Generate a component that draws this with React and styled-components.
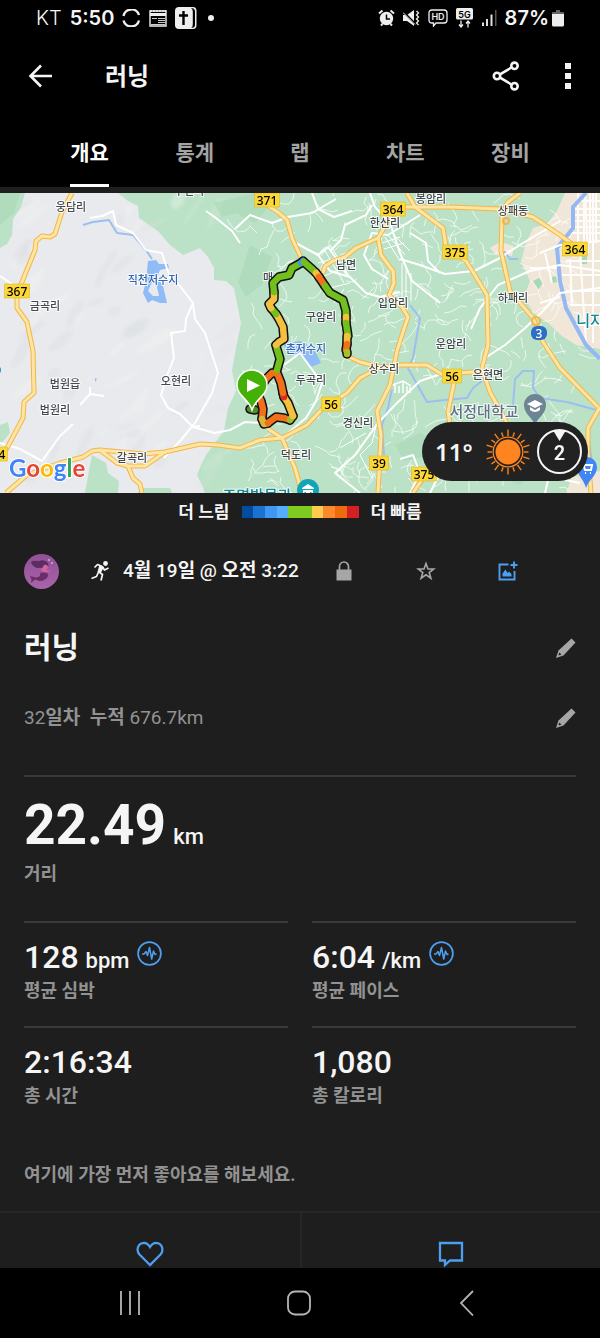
import React from 'react'
import styled, { createGlobalStyle } from 'styled-components'

const GlobalStyle = createGlobalStyle`
  * {
    box-sizing: border-box;
  }
  body {
    margin: 0;
    background: #1e1e1e;
    color: #f5f5f5;
    font-family: Roboto, "Noto Sans CJK KR", sans-serif;
  }
  button, a {
    font: inherit;
    color: inherit;
    background: none;
    border: none;
    padding: 0;
    cursor: pointer;
    text-decoration: none;
  }
  h1, h2, p, dl, dd {
    margin: 0;
  }
  svg {
    display: block;
  }
`

/* ---------- map data ---------- */

const highways = [
  '72,0 62,19 55,41 50,44 42,43 36,48 35,57 22,89 17,102 17,115 27,129 33,158 34,200 24,209 23,225 7,255 0,266',
  '6,300 27,282 60,270 83,264 92,258 100,257 143,261 165,259 200,251 218,252 240,255 260,247 282,245 307,232 323,215 347,200 360,185 380,174 402,172 427,172 443,182 458,180 473,179 483,180',
  '100,257 117,270 128,273 145,273 165,259',
  '128,273 133,285 140,291 142,300',
  '267,12 279,20 287,27 292,45 303,69',
  '323,80 325,73 333,68 345,64 356,55 378,45 387,30 393,18',
  '378,45 381,62 393,78 394,90 389,102 402,114 408,124 402,142 397,158 390,192 377,218 381,242 378,300',
  '347,163 360,169 380,174',
  '268,236 282,245 295,275 302,300',
  '407,0 415,14 443,35 446,54 466,68 473,79 487,102 488,152 482,175 490,199 507,230',
  '455,185 448,219 451,238 430,275 413,300',
  '400,14 450,14 500,16 533,24 560,42 580,57',
  '520,0 507,10 502,24 501,58 510,98 533,125 543,149 560,175 598,214',
  '600,214 588,235 588,260 591,300',
]

const minorRoads = [
  '90,25 102,23 113,18 116,32 133,40 146,57 162,60 170,85 180,93 193,110 186,126 185,138 171,140 174,165 168,180 161,202 168,215 180,221 193,234 200,233 ',
  '193,110 195,126 205,140 218,180 212,200 195,230 180,248 164,265',
  '193,234 215,240 230,237 245,229 262,230',
  '80,212 90,201 104,203',
  '90,201 90,194',
  '73,231 60,243 42,268 20,256 0,250',
  '0,83 12,91 17,104',
  '292,48 318,62 330,78 350,84 366,100 380,104 400,99',
  '318,62 328,54 336,65 347,82',
  '282,245 306,225 316,208 322,190 300,160 284,172',
  '372,12 366,22 345,32 341,47 330,58',
  '400,66 420,72 445,81 474,78 498,66 523,50 560,28',
  '360,300 335,280 355,262 378,230 395,212 420,188 450,178',
  '471,136 480,115 498,92 530,78 560,72 600,78',
  '485,165 505,152 524,136 541,120 560,100 600,95',
  '370,0 375,14 390,30 400,60 412,88 440,110',
  '410,40 426,50 428,68 440,80',
  '540,60 560,52 600,48',
  '430,300 445,270 470,262 500,280 540,282 580,290',
  '400,266 413,262 420,280 410,300',
  '545,300 552,270 570,240',
  '388,86 372,76 364,62 372,40 388,42 420,22',
  '235,36 250,22 272,30 288,24 312,20 336,6',
  '240,50 232,38 216,25 206,18',
  '312,0 318,16 334,24 352,18',
]

const rivers = [
  '586,0 573,14 573,35 557,55 560,88 566,115 586,152 600,166',
]

const streams = [
  '83,32 93,29 109,27 117,40 133,42 146,57 152,66',
  '410,112 420,125 413,165 408,175 427,209 445,207 467,205 473,195 482,188',
  '513,212 515,186 523,178 534,178 533,195 540,205 567,209 600,218',
  '392,196 388,215 382,232 384,262',
  '504,58 510,66 518,66',
  '588,240 592,270 590,300',
]

const routeSigns = [
  { x: 17, y: 98, text: '367' },
  { x: -5, y: 261, text: '364' },
  { x: 267, y: 7, text: '371' },
  { x: 393, y: 16, text: '364' },
  { x: 455, y: 59, text: '375' },
  { x: 575, y: 56, text: '364' },
  { x: 452, y: 183, text: '56', w: 19 },
  { x: 331, y: 211, text: '56', w: 19 },
  { x: 379, y: 270, text: '39', w: 19 },
  { x: 424, y: 281, text: '375' },
]

const places = [
  { x: 71, y: 13, text: '웅담리' },
  { x: 45, y: 112, text: '금곡리' },
  { x: 65, y: 190, text: '법원읍' },
  { x: 55, y: 216, text: '법원리' },
  { x: 176, y: 187, text: '오현리' },
  { x: 132, y: 264, text: '갈곡리' },
  { x: 189, y: -3, text: '무건리' },
  { x: 153, y: 86, text: '직천저수지', color: '#3367b5' },
  { x: 385, y: 29, text: '한산리' },
  { x: 346, y: 71, text: '남면' },
  { x: 268, y: 84, text: '매' },
  { x: 321, y: 123, text: '구암리' },
  { x: 393, y: 109, text: '입암리' },
  { x: 306, y: 155, text: '촌저수지', color: '#3367b5' },
  { x: 311, y: 186, text: '두곡리' },
  { x: 384, y: 175, text: '상수리' },
  { x: 358, y: 229, text: '경신리' },
  { x: 296, y: 261, text: '덕도리' },
  { x: 257, y: 301, text: '조명박물관', color: '#12869a', size: 15 },
  { x: 431, y: 5, text: '봉암리' },
  { x: 513, y: 17, text: '상패동' },
  { x: 513, y: 104, text: '하패리' },
  { x: 451, y: 150, text: '운암리' },
  { x: 488, y: 181, text: '은현면' },
  { x: 484, y: 217, text: '서정대학교', color: '#5f7385', size: 15 },
  { x: 590, y: 126, text: '니지', color: '#12869a', size: 15 },
]

const GREEN = '#73bf1d'
const YELLOW = '#f5bf3f'
const ORANGE = '#f2701a'

const track = [
  { color: '#4f8f2a', points: '250,216 255,217' },
  { color: ORANGE, points: '257,200 261,208 263,216 262,226' },
  { color: '#d9b53a', points: '262,226 264,231 268,230' },
  { color: ORANGE, points: '268,230 276,224 284,225 290,227' },
  { color: '#9dbb33', points: '290,227 293,223' },
  { color: YELLOW, points: '293,223 288,210 284,204' },
  { color: '#dd2a1c', points: '284,204 283,200' },
  { color: ORANGE, points: '283,200 281,190 277,180 272,180 266,186 262,192' },
  { color: GREEN, points: '277,177 280,166 277,156 276,152' },
  { color: YELLOW, points: '276,152 279,149 284,146 283,134 279,126 276,121' },
  { color: GREEN, points: '276,121 271,115' },
  { color: YELLOW, points: '271,115 269,111 274,106 274,99' },
  { color: GREEN, points: '274,99 273,90 279,84 289,82 292,75 301,70' },
  { color: '#4294f0', points: '301,70 303,68' },
  { color: GREEN, points: '304,69 313,77 316,80' },
  { color: YELLOW, points: '316,80 319,84' },
  { color: ORANGE, points: '319,84 325,93' },
  { color: GREEN, points: '325,93 330,100 343,107 346,118 346,124' },
  { color: YELLOW, points: '346,124 346,130' },
  { color: GREEN, points: '346,130 348,143' },
  { color: YELLOW, points: '347,143 347,151' },
  { color: ORANGE, points: '347,151 346,157' },
  { color: '#a6c02c', points: '347,159 347,161' },
]

// small seeded generator, keeps the back roads and the hill shading stable between renders
function createRandom(seed) {
  let value = seed
  return () => {
    value = (value * 16807) % 2147483647
    return value / 2147483647
  }
}

function buildLanes() {
  const random = createRandom(417)
  const lanes = []
  for (let i = 0; i < 330; i++) {
    let x = 245 + random() * 335
    let y = random() * 300
    if (x < 330 && y < 150 && random() < 0.5) continue
    let angle = random() * Math.PI * 2
    let d = `M${x.toFixed(0)} ${y.toFixed(0)}`
    const steps = 2 + Math.floor(random() * 4)
    for (let s = 0; s < steps; s++) {
      angle += (random() - 0.5) * 1.7
      x += Math.cos(angle) * 6
      y += Math.sin(angle) * 6
      d += `L${x.toFixed(0)} ${y.toFixed(0)}`
    }
    lanes.push(d)
  }
  return lanes.join('')
}

function buildHills() {
  const random = createRandom(93)
  return Array.from({ length: 70 }, (_, i) => ({
    x: Math.round(20 + random() * 210),
    y: Math.round(random() * 290),
    rx: Math.round(6 + random() * 14),
    ry: Math.round(2 + random() * 4),
    angle: Math.round(-70 + random() * 50),
    light: i % 2 === 0,
  }))
}

const lanes = buildLanes()
const hills = buildHills()

function MapDrawing() {
  return (
    <MapSvg viewBox="0 0 600 300" preserveAspectRatio="xMidYMid slice" role="img" aria-label="러닝 경로 지도">
      <defs>
        <filter id="soft"><feGaussianBlur stdDeviation="1.5" /></filter>
      </defs>
      <rect width="600" height="300" fill="#bbe2c6" />
      <path fill="#e8eaed" d="M0 0H118L128 8 138 13 139 25 158 38 170 52 183 62 200 55 208 64 214 75 214 87 226 88 234 95 237 110 241 130 236 155 232 178 236 198 228 215 224 238 206 262 201 272 197 282 202 292 205 300H0Z" />
      <g filter="url(#soft)">
        {hills.map((hill, i) => (
          <ellipse
            key={i}
            cx={hill.x}
            cy={hill.y}
            rx={hill.rx}
            ry={hill.ry}
            fill={hill.light ? '#f1f3f0' : '#dcdee1'}
            opacity={hill.x > 180 ? 0.15 : 0.4}
            transform={`rotate(${hill.angle} ${hill.x} ${hill.y})`}
          />
        ))}
      </g>
      <path fill="#bbe2c6" d="M0 0H25L21 14 13 26 12 42 7 51 0 55ZM0 232 8 229 10 240 0 252ZM92 262 106 270 108 280 119 288 118 300H85L89 278ZM140 295H170L172 300H138Z" />
      <path fill="#a9d8b7" opacity=".6" d="M0 0H20L14 20 0 32ZM255 0 270 12 255 30 236 20 222 24 214 10ZM250 52 272 64 262 92 246 104 238 90ZM395 252 420 240 440 250 424 264 404 268ZM490 240 520 236 548 262 520 292 500 284Z" />
      <path fill="#f1e7d8" d="M565 0 557 18 548 30 533 35 526 50 521 68 530 88 524 104 533 119 548 130 562 143 576 152 600 156V0ZM490 55 500 49 514 53 512 63 496 62ZM566 300 572 284 600 278V300Z" />
      <path fill="#a9d8b7" d="M533 88 539 85 543 90 538 97ZM552 84 556 83 557 89 552 90ZM582 63H587V71H582Z" />
      <path fill="none" stroke="#fff" strokeWidth="1" opacity=".7" d={lanes} />
      <path
        fill="none"
        stroke="#fff"
        strokeWidth="2"
        opacity=".9"
        d="M577 8H600M575 16H600M575 22H600M571 28H600M570 34H600M567 40H600M566 68H600M562 82H600M566 98H600M570 112H600M575 132H600M578 0V50M584 10V50M590 0V50M596 0V50M585 0 588 60M593 0V150M580 60 586 150M570 66 572 112M545 60 552 90M530 75H560M540 110 560 104"
      />
      <path fill="none" stroke="#fff" strokeWidth="1" d="M324 56 344 90M330 52 350 84M318 70 340 64M322 84 345 74M326 96 350 90M334 110 344 96M385 44 400 68M388 42 405 62M392 40 410 58M382 50 400 44M384 56 404 50M402 70V118M406 72V112M411 80V108M380 215 372 250 360 262M366 240 340 255M360 262 372 285" />
      <path fill="#8fbcf7" d="M148 68 156 67 159 71 168 71 169 75 160 77 157 84 163 93 167 110 160 110 152 107 148 110 143 100 146 88ZM95 185 97 186 95 189ZM283 151 300 148 314 156 321 170 311 174 302 163 288 160Z" />
      <path fill="#e8eaed" d="M153 87 157 94 159 103 153 103 148 98Z" />
      {rivers.map((points) => <polyline key={points} points={points} fill="none" stroke="#94b8f4" strokeWidth="4" />)}
      {streams.map((points) => <polyline key={points} points={points} fill="none" stroke="#9dbff0" strokeWidth="2" strokeLinejoin="round" />)}
      {minorRoads.map((points) => <polyline key={points} points={points} fill="none" stroke="#fff" strokeWidth="2" strokeLinejoin="round" />)}
      {highways.map((points) => <polyline key={points} points={points} fill="none" stroke="#f4b545" strokeWidth="5" strokeLinejoin="round" />)}
      {highways.map((points) => <polyline key={points} points={points} fill="none" stroke="#fde6a4" strokeWidth="3" strokeLinejoin="round" />)}
      <circle cx="536" cy="128" r="4" fill="none" stroke="#f4b545" strokeWidth="2" />
      <circle cx="506" cy="28" r="3" fill="none" stroke="#f4b545" strokeWidth="2" />

      {places.map((place) => (
        <PlaceName key={place.text} x={place.x} y={place.y} fill={place.color || '#454a50'} $size={place.size}>
          {place.text}
        </PlaceName>
      ))}
      {routeSigns.map((sign) => {
        const width = sign.w || 25
        return (
          <g key={`${sign.x}-${sign.y}`}>
            <rect x={sign.x - width / 2} y={sign.y - 7} width={width} height="14" fill="#fbd737" stroke="#e0b928" strokeWidth=".6" />
            <SignText x={sign.x} y={sign.y}>{sign.text}</SignText>
          </g>
        )
      })}
      <rect x="531" y="133" width="16" height="14" rx="6" fill="#2e6fc4" />
      <SignText x="539" y="140" fill="#fff">3</SignText>

      <path d="M395 200V190M399 200V193M403 200V189M407 200V193M410 200V194M393 192 403 188 411 193" stroke="#fff" strokeWidth="1.5" fill="none" />
      <circle cx="308" cy="297" r="11" fill="#12a5b8" />
      <path d="M302 295 308 291 314 295V296H302ZM303 297H313V304H303Z" fill="#fff" />
      <path d="M305 303V299L308 302 311 299V303" stroke="#12a5b8" fill="none" />
      <path d="M535 232C532 224 524 221 524 212A11 11 0 0 1 546 212C546 221 538 224 535 232Z" fill="#6d8494" />
      <path d="M527 211 535 207 543 211 535 215ZM530 214V217Q535 221 540 217V214L535 217Z" fill="#fff" />
      <path d="M586 295C584 286 577 283 577 274A10 10 0 0 1 597 274C597 283 589 286 586 295Z" fill="#4285f4" />
      <path d="M580 270H583L585 277H591L592 272H584M585 280H586M590 280H591" stroke="#fff" strokeWidth="2" fill="none" />
      <circle cx="-3" cy="177" r="4" fill="#12a5b8" />

      {track.map((part, i) => <polyline key={i} points={part.points} fill="none" stroke="#111" strokeWidth="9.5" strokeLinecap="round" strokeLinejoin="round" />)}
      {track.map((part, i) => <polyline key={i} points={part.points} fill="none" stroke={part.color} strokeWidth="6.5" strokeLinecap="round" strokeLinejoin="round" />)}
      <path d="M252 217C249 206 237 203 237 192A15 15 0 0 1 267 192C267 203 255 206 252 217Z" fill="#43b105" stroke="#fff" strokeWidth="1.5" />
      <path d="M247 186 260 192.500 247 199Z" fill="#fff" />

      <GoogleMark x="9" y="284">
        <tspan fill="#4285f4">G</tspan>
        <tspan fill="#ea4335">o</tspan>
        <tspan fill="#fbbc05">o</tspan>
        <tspan fill="#4285f4">g</tspan>
        <tspan fill="#34a853">l</tspan>
        <tspan fill="#ea4335">e</tspan>
      </GoogleMark>
    </MapSvg>
  )
}

/* ---------- icons ---------- */

const SyncIcon = () => (
  <svg width="19" height="18" viewBox="0 0 19 18" fill="none" stroke="#eee" strokeWidth="2.400">
    <path d="M1.500 7A8 8 0 0 1 17 6M1.500 11.500A8 8 0 0 0 17 11.500" />
  </svg>
)

const CalendarIcon = () => (
  <svg width="18" height="18" viewBox="0 0 18 18">
    <path d="M1 2H17V17H1Z" fill="none" stroke="#eee" strokeWidth="1.400" />
    <path d="M1 4H17V7H1Z" fill="#eee" />
    <path d="M2 1V3M5 1V3M8 1V3M11 1V3M14 1V3M16.500 1V3" stroke="#eee" strokeWidth="1.500" />
    <path d="M9 9.500H16M9 11.500H16M9 13.500H16M2 15.500H16M3 9.500H8" stroke="#ccc" strokeWidth="1.100" />
  </svg>
)

const BibleIcon = () => (
  <svg width="22" height="22" viewBox="0 0 22 22">
    <path d="M4 0H18Q21.500 0 21.500 4V18Q21.500 22 18 22H4Q0 22 0 18V4Q0 0 4 0Z" fill="#eee" />
    <path d="M16 1Q19.500 1 20 4V18Q20 21 16 21Q18 20 17.800 17V5Q18 2 16 1Z" fill="#000" />
    <path d="M8.500 4V18M4 8.500H13" stroke="#000" strokeWidth="2.400" />
  </svg>
)

const AlarmIcon = () => (
  <svg width="17" height="18" viewBox="0 0 17 18">
    <circle cx="8.500" cy="9.500" r="6.700" fill="#eee" />
    <path d="M1 4.500 4.500 1.500M16 4.500 12.500 1.500M3 16.500 4.500 15M14 16.500 12.500 15" stroke="#eee" strokeWidth="2" />
    <path d="M8.500 5.500V10H12" stroke="#000" strokeWidth="1.500" fill="none" />
  </svg>
)

const MuteIcon = () => (
  <svg width="17" height="18" viewBox="0 0 17 18">
    <path d="M0 6H4L11 1V17L4 12H0Z" fill="#eee" />
    <path d="M0 2.500 13 15.500" stroke="#000" strokeWidth="2" />
    <path d="M0 3.500 12 15.500" stroke="#eee" />
    <path d="M13.500 2 15.500 4 13.500 6 15.500 8 13.500 10 15.500 12 13.500 14 15.500 16" stroke="#eee" strokeWidth="1.300" fill="none" />
  </svg>
)

const HdIcon = () => (
  <svg width="20" height="18" viewBox="0 0 20 18">
    <path d="M4 1H16Q19 1 19 4V11Q19 14 16 14H8L5.500 17V14H4Q1 14 1 11V4Q1 1 4 1Z" fill="none" stroke="#eee" strokeWidth="1.300" />
    <TinyText x="10" y="11" fill="#eee">HD</TinyText>
  </svg>
)

const FiveGIcon = () => (
  <svg width="17" height="20" viewBox="0 0 17 20">
    <rect width="17" height="11.500" rx="1.500" fill="#eee" />
    <TinyText x="8.500" y="9.500" fill="#000">5G</TinyText>
    <path d="M5 12.500V19M3 16.500 5 19 7 16.500M12 19.500V13M10 15.500 12 13 14 15.500" fill="none" stroke="#eee" strokeWidth="1.300" />
  </svg>
)

const SignalIcon = () => (
  <svg width="16" height="18" viewBox="0 0 16 18">
    <path d="M1 13.500H3V17H1ZM5 10H7V17H5ZM9.500 5.500H11.500V17H9.500Z" fill="#ddd" />
    <path d="M14 1H15.500V17H14Z" fill="#555" />
  </svg>
)

const BatteryIcon = () => (
  <svg width="12" height="18" viewBox="0 0 12 18">
    <path d="M4 1H8V3H11Q12 3 12 4V6H0V4Q0 3 1 3H4Z" fill="#666" />
    <path d="M0 5H12V16Q12 17.500 10.500 17.500H1.500Q0 17.500 0 16Z" fill="#eee" />
  </svg>
)

const BackIcon = () => (
  <svg width="24" height="24" viewBox="0 0 24 24" fill="none" stroke="#f5f5f5" strokeWidth="2.600">
    <path d="M24 12H2M13 1.500 2.500 12 13 22.500" />
  </svg>
)

const ShareIcon = () => (
  <svg width="28" height="30" viewBox="0 0 28 30" fill="none" stroke="#f5f5f5" strokeWidth="2.600">
    <circle cx="22.500" cy="4.800" r="3.200" />
    <circle cx="5" cy="15" r="3.200" />
    <circle cx="22.500" cy="25.200" r="3.200" />
    <path d="M8 13.300 19.500 6.500M8 16.700 19.500 23.500" />
  </svg>
)

const MoreIcon = () => (
  <svg width="8" height="28" viewBox="0 0 8 28" fill="#f5f5f5">
    <path d="M1 1H7V7H1ZM1 11H7V17H1ZM1 21H7V27H1Z" />
  </svg>
)

const Avatar = () => (
  <svg width="35" height="35" viewBox="0 0 35 35" role="img" aria-label="프로필">
    <defs>
      <linearGradient id="avatar" x1="0" y1="0" x2="0" y2="1">
        <stop offset="0" stopColor="#915097" />
        <stop offset="1" stopColor="#a964ab" />
      </linearGradient>
    </defs>
    <circle cx="17.500" cy="17.500" r="17.500" fill="url(#avatar)" />
    <path d="M7 8Q9 6 15 7Q21 5 24 9Q26 13 21 15Q17 13 13 14Q8 12 7 8Z" fill="#5d2c63" />
    <path d="M20 11Q24 10 24 14L22 16 28 17 21 18.500 17 16Z" fill="#d3649f" />
    <path d="M16 19Q25 17 24 22Q22 27 15 27L11 25.500 7 29 7.500 25.500 6 22 12 23.500Q17 23 16 19Z" fill="#6b2f68" />
    <circle cx="25" cy="6" r="1" fill="#d7a5d8" />
    <circle cx="28" cy="9" r="1" fill="#d7a5d8" />
  </svg>
)

const RunnerIcon = () => (
  <svg width="19" height="20" viewBox="0 0 19 20">
    <circle cx="14.500" cy="2.500" r="2.400" fill="#f5f5f5" />
    <path d="M3.500 6.500 6.500 3.500 11 5.500 8 11 11.500 13.500 10 19.500M7.500 11 5.500 15.500 0.500 17.500M11.500 6 13.500 9 17.500 7" fill="none" stroke="#f5f5f5" strokeWidth="1.700" strokeLinejoin="round" />
    <path d="M8.500 3.500 13 6 9.500 12.500 6.500 11Z" fill="#f5f5f5" />
  </svg>
)

const LockIcon = () => (
  <svg width="16" height="20" viewBox="0 0 16 20">
    <path d="M3.500 9V5.500A4.500 4.500 0 0 1 12.500 5.500V9" fill="none" stroke="#a6a6a6" strokeWidth="1.700" />
    <path d="M.5 8.500H15.500V19.500H.5Z" fill="#a6a6a6" />
  </svg>
)

const StarIcon = () => (
  <svg width="20" height="20" viewBox="0 0 20 20" fill="none" stroke="#a6a6a6" strokeWidth="1.600">
    <path d="M10 2.500 12 8H17.800L13.200 11.500 14.900 17.200 10 13.800 5.100 17.200 6.800 11.500 2.200 8H8Z" />
  </svg>
)

const AddImageIcon = () => (
  <svg width="20" height="20" viewBox="0 0 20 20">
    <path d="M10.500 3.500H1.500V18.500H16.500V10" fill="none" stroke="#4d9ff0" strokeWidth="1.900" />
    <path d="M12.500 4H19.500M16 .5V7.500" stroke="#4d9ff0" strokeWidth="1.900" />
    <path d="M4.500 15.500V12.500L7.500 8.500 9.500 12 11 10.500 13.500 13V15.500Z" fill="#4d9ff0" />
  </svg>
)

const PencilIcon = () => (
  <svg width="20" height="20" viewBox="0 0 20 20">
    <path d="M15.500 .5 19.500 4.500 7.500 17.500 0 20 2.500 12.500Z" fill="#a6a6a6" />
    <path d="M3.200 14.500 5.500 16.500 2.500 17.500Z" fill="#1e1e1e" />
  </svg>
)

const PulseIcon = () => (
  <svg width="25" height="25" viewBox="0 0 25 25" fill="none" stroke="#4d9ff0">
    <circle cx="12.500" cy="12.500" r="11.400" strokeWidth="1.700" />
    <path d="M5 13H7L9 10.500 10.500 14.500 12.500 6.500 14.700 18 16.500 10 18 13.500 19.500 13" strokeWidth="1.500" strokeLinejoin="round" />
  </svg>
)

const HeartIcon = () => (
  <svg width="28" height="28" viewBox="0 0 28 28" fill="none" stroke="#4d9ff0" strokeWidth="2.300">
    <path d="M14 25 3.500 14.500C0 10.500 1.500 3 8 2.800 11 2.800 12.500 4.500 14 7 15.500 4.500 17 2.800 20 2.800 26.500 3 28 10.500 24.500 14.500Z" />
  </svg>
)

const CommentIcon = () => (
  <svg width="26" height="28" viewBox="0 0 26 28" fill="none" stroke="#4d9ff0" strokeWidth="2.300">
    <path d="M2 3H24V20.500H12L7 25V20.500H2Z" />
  </svg>
)

const SunIcon = () => (
  <svg width="46" height="46" viewBox="0 0 46 46">
    <circle cx="23" cy="23" r="12.500" fill="#fd841f" />
    <circle cx="23" cy="23" r="14.800" fill="none" stroke="#fd841f" strokeWidth="1.300" />
    {Array.from({ length: 20 }, (_, i) => (
      <path key={i} d={i % 2 ? 'M23 7V2.500' : 'M23 7V.5'} stroke="#fd841f" strokeWidth="1.400" transform={`rotate(${i * 18} 23 23)`} />
    ))}
  </svg>
)

/* ---------- page ---------- */

const tabs = ['개요', '통계', '랩', '차트', '장비']

const paceColors = ['#024ba0', '#1b72d3', '#3d97f5', '#58acfd', '#7fcb20', '#7fcb20', '#ffcb4c', '#fc8a2b', '#ec6b10', '#d61f22']

const stats = [
  { label: '평균 심박', value: '128', unit: 'bpm', pulse: true },
  { label: '평균 페이스', value: '6:04', unit: '/km', pulse: true },
  { label: '총 시간', value: '2:16:34' },
  { label: '총 칼로리', value: '1,080' },
]

function App() {
  return (
    <Page>
      <GlobalStyle />
      <StatusBar>
        <StatusGroup $gap={8}>
          <Carrier>KT</Carrier>
          <StatusText>5:50</StatusText>
          <SyncIcon />
          <CalendarIcon />
          <BibleIcon />
          <Dot />
        </StatusGroup>
        <StatusGroup $gap={8}>
          <AlarmIcon />
          <MuteIcon />
          <HdIcon />
          <FiveGIcon />
          <SignalIcon />
          <Battery>
            <StatusText>87%</StatusText>
            <BatteryIcon />
          </Battery>
        </StatusGroup>
      </StatusBar>

      <Toolbar>
        <IconButton aria-label="뒤로"><BackIcon /></IconButton>
        <ToolbarTitle>러닝</ToolbarTitle>
        <IconButton aria-label="공유"><ShareIcon /></IconButton>
        <IconButton aria-label="더보기"><MoreIcon /></IconButton>
      </Toolbar>

      <Tabs role="tablist">
        {tabs.map((tab, i) => (
          <Tab key={tab} role="tab" aria-selected={i === 0}>
            <TabLabel $active={i === 0}>{tab}</TabLabel>
          </Tab>
        ))}
      </Tabs>

      <MapPanel>
        <MapDrawing />
        <Weather>
          <Temperature>11°</Temperature>
          <SunIcon />
          <Wind>2</Wind>
        </Weather>
      </MapPanel>

      <Legend>
        <span>더 느림</span>
        <PaceScale>
          {paceColors.map((color, i) => <PaceStep key={i} $color={color} />)}
        </PaceScale>
        <span>더 빠름</span>
      </Legend>

      <Meta>
        <Avatar />
        <MetaInfo>
          <RunnerIcon />
          <span>4<b>월</b> 19<b>일</b> @ <b>오전</b> 3:22</span>
        </MetaInfo>
        <MetaButton aria-label="비공개"><LockIcon /></MetaButton>
        <MetaButton aria-label="즐겨찾기"><StarIcon /></MetaButton>
        <MetaButton aria-label="사진 추가"><AddImageIcon /></MetaButton>
      </Meta>

      <Body>
        <EditRow $height={72}>
          <Name>러닝</Name>
          <IconButton aria-label="이름 편집"><PencilIcon /></IconButton>
        </EditRow>
        <EditRow $height={68}>
          <Note>32<b>일차</b>{'  '}<b>누적</b> 676.7km</Note>
          <IconButton aria-label="메모 편집"><PencilIcon /></IconButton>
        </EditRow>

        <Distance>
          <DistanceValue>22.49<Unit>km</Unit></DistanceValue>
          <Label>거리</Label>
        </Distance>

        <StatGrid>
          {stats.map((stat) => (
            <Stat key={stat.label}>
              <StatValue>
                <span>{stat.value}{stat.unit && <Unit>{stat.unit}</Unit>}</span>
                {stat.pulse && <PulseIcon />}
              </StatValue>
              <Label>{stat.label}</Label>
            </Stat>
          ))}
        </StatGrid>

        <LikeHint>여기에 가장 먼저 좋아요를 해보세요.</LikeHint>
      </Body>

      <Social>
        <SocialButton aria-label="좋아요"><HeartIcon /></SocialButton>
        <SocialButton aria-label="댓글"><CommentIcon /></SocialButton>
      </Social>

      <SystemNav>
        <IconButton aria-label="최근 앱">
          <svg width="24" height="26" viewBox="0 0 24 26" stroke="#b5b5b5" strokeWidth="1.800"><path d="M3 1V25M12 1V25M21 1V25" /></svg>
        </IconButton>
        <IconButton aria-label="홈">
          <svg width="24" height="26" viewBox="0 0 24 26" fill="none" stroke="#b5b5b5" strokeWidth="1.800"><rect x="1" y="1.500" width="22" height="23" rx="7" /></svg>
        </IconButton>
        <IconButton aria-label="이전">
          <svg width="24" height="26" viewBox="0 0 24 26" fill="none" stroke="#b5b5b5" strokeWidth="1.800"><path d="M18 1 6 13 18 25.500" /></svg>
        </IconButton>
      </SystemNav>
    </Page>
  )
}

export default App

const Page = styled.main`
  display: flex;
  flex-direction: column;
  min-height: 100vh;
`

const StatusBar = styled.div`
  display: flex;
  justify-content: space-between;
  align-items: center;
  height: 36px;
  padding: 0 36px;
  background: #000;
`
const StatusGroup = styled.div`
  display: flex;
  align-items: center;
  gap: ${({ $gap }) => $gap}px;
`
const Carrier = styled.span`
  font: 300 20px Inter, sans-serif;
`
const StatusText = styled.span`
  font: 600 20px Inter, sans-serif;
`
const Battery = styled.div`
  display: flex;
  align-items: center;
  gap: 3px;
`
const Dot = styled.span`
  width: 6px;
  height: 6px;
  margin-left: 3px;
  border-radius: 50%;
  background: #eee;
`
const TinyText = styled.text`
  font: 600 9px Inter, sans-serif;
  text-anchor: middle;
`

const Toolbar = styled.header`
  display: flex;
  align-items: center;
  gap: 44px;
  height: 80px;
  padding: 0 28px;
  background: #000;
`
const ToolbarTitle = styled.h1`
  flex: 1;
  padding: 2px 0 0 9px;
  font-size: 24px;
  font-weight: 700;
  line-height: 32px;
`
const IconButton = styled.button`
  display: flex;
  align-items: center;
  justify-content: center;
`

const Tabs = styled.nav`
  display: grid;
  grid-template-columns: repeat(5, 1fr);
  height: 71px;
  padding: 0 37px;
  background: #000;
`
const Tab = styled.button`
  display: flex;
  justify-content: center;
`
const TabLabel = styled.span`
  height: 71px;
  padding-top: 21px;
  font-size: 21px;
  font-weight: 700;
  line-height: 32px;
  color: ${({ $active }) => ($active ? '#fff' : '#a3a3a3')};
  border-bottom: 3px solid ${({ $active }) => ($active ? '#fff' : 'transparent')};
`

const MapPanel = styled.section`
  position: relative;
  height: 300px;
  margin-top: 6px;
  overflow: hidden;
`
const MapSvg = styled.svg`
  width: 100%;
  height: 100%;
`
const PlaceName = styled.text`
  font-family: "Noto Sans CJK KR", sans-serif;
  font-size: ${({ $size }) => $size || 11}px;
  font-weight: 500;
  text-anchor: middle;
  dominant-baseline: central;
  paint-order: stroke;
  stroke: rgba(255, 255, 255, 0.8);
  stroke-width: 2px;
`
const SignText = styled.text`
  font: 500 12px "Noto Sans", sans-serif;
  text-anchor: middle;
  dominant-baseline: central;
`
const GoogleMark = styled.text`
  font: 700 24px Lato, sans-serif;
  paint-order: stroke;
  stroke: #fff;
  stroke-width: 2px;
`
const Weather = styled.div`
  position: absolute;
  right: 12px;
  bottom: 12px;
  display: flex;
  align-items: center;
  gap: 6px;
  height: 59px;
  padding: 0 6px 0 13px;
  border-radius: 30px;
  background: #222;
`
const Temperature = styled.span`
  width: 44px;
  font: 600 24px "Noto Sans", sans-serif;
`
const Wind = styled.span`
  position: relative;
  display: flex;
  align-items: center;
  justify-content: center;
  width: 45px;
  height: 45px;
  padding-top: 2px;
  border: 2px solid #f5f5f5;
  border-radius: 50%;
  font-size: 20px;
  font-weight: 600;
  &::before {
    content: "";
    position: absolute;
    top: 0;
    width: 12px;
    height: 10px;
    background: #f5f5f5;
    clip-path: polygon(0 0, 100% 0, 50% 100%);
  }
`

const Legend = styled.div`
  display: flex;
  align-items: center;
  justify-content: center;
  gap: 12px;
  height: 37px;
  font-size: 17px;
  font-weight: 700;
  line-height: 24px;
`
const PaceScale = styled.div`
  display: flex;
  width: 117px;
  height: 12px;
`
const PaceStep = styled.span`
  flex: 1;
  background: ${({ $color }) => $color};
`

const Meta = styled.section`
  display: flex;
  align-items: center;
  height: 82px;
  padding: 0 51px 0 24px;
`
const MetaInfo = styled.div`
  display: flex;
  flex: 1;
  align-items: center;
  gap: 13px;
  padding-left: 32px;
  font-size: 19px;
  font-weight: 500;
  line-height: 24px;
  white-space: nowrap;
`
const MetaButton = styled(IconButton)`
  width: 82px;
  height: 48px;
`

const Body = styled.section`
  flex: 1;
  padding: 0 24px;
`
const EditRow = styled.div`
  display: flex;
  align-items: center;
  justify-content: space-between;
  height: ${({ $height }) => $height}px;
`
const Name = styled.h2`
  font-size: 30px;
  font-weight: 700;
  line-height: 40px;
`
const Note = styled.p`
  color: #929292;
  font-size: 19px;
  line-height: 24px;
  white-space: pre;
`

const Distance = styled.div`
  margin-top: 23px;
  padding: 14px 0 35px;
  border-top: 2px solid #3a3a3a;
`
const DistanceValue = styled.p`
  font-size: 55px;
  font-weight: 700;
  line-height: 68px;
`
const Unit = styled.span`
  margin-left: 7px;
  font-size: 22px;
  font-weight: 500;
  line-height: 22px;
`
const Label = styled.p`
  padding-top: 3px;
  color: #929292;
  font-size: 18px;
  font-weight: 700;
  line-height: 24px;
`
const StatGrid = styled.div`
  display: grid;
  grid-template-columns: 1fr 1fr;
  column-gap: 24px;
`
const Stat = styled.div`
  height: 105px;
  padding-top: 15px;
  border-top: 2px solid #3a3a3a;
`
const StatValue = styled.div`
  display: flex;
  gap: 8px;
  font-size: 32px;
  font-weight: 500;
  line-height: 38px;
  svg {
    margin-top: 3px;
  }
`
const LikeHint = styled.p`
  padding: 32px 0 24px;
  color: #929292;
  font-size: 18px;
  font-weight: 700;
  line-height: 24px;
`

const Social = styled.footer`
  display: grid;
  grid-template-columns: 1fr 1fr;
  height: 57px;
  border-top: 2px solid #262626;
`
const SocialButton = styled.button`
  display: flex;
  align-items: flex-end;
  justify-content: center;
  & + & {
    border-left: 2px solid #262626;
  }
`

const SystemNav = styled.nav`
  display: flex;
  align-items: center;
  justify-content: space-between;
  height: 70px;
  padding: 0 121px 0 118px;
  background: #000;
`
